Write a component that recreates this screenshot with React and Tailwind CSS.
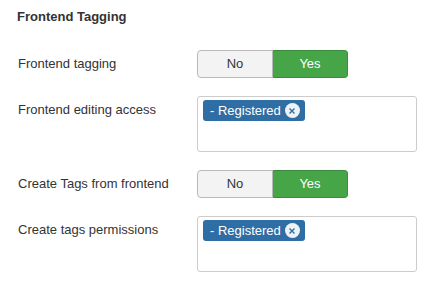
export default function App() {
  const font = { fontFamily: '"Liberation Sans", Arial, sans-serif' };
  const Toggle = () => (
    <div className="flex h-[28px] w-[151px] text-[13px]">
      <div className="flex flex-1 items-center justify-center rounded-l-[4px] border border-[#b8b8b8] bg-[#f3f3f3] text-[#333]">No</div>
      <div className="flex flex-1 items-center justify-center rounded-r-[4px] border border-l-0 border-[#3d8b3d] bg-[#46a546] text-white">Yes</div>
    </div>
  );
  const Box = () => (
    <div className="flex h-[56px] w-[220px] items-start rounded-[3px] border border-[#ccc] bg-white pl-[5px] pt-[3px]">
      <span className="flex h-[21px] items-center gap-[4px] rounded-[3px] bg-[#2f6ea5] pl-[7px] pr-[5px] text-[13px] text-white">
        - Registered
        <span className="flex h-[15px] w-[15px] items-center justify-center rounded-full bg-[#eef2f7]">
          <svg width="8" height="8" viewBox="0 0 8 8"><path d="M1.5 1.5L6.5 6.5M6.5 1.5L1.5 6.5" stroke="#2f6ea5" strokeWidth="1.4" /></svg>
        </span>
      </span>
    </div>
  );
  return (
    <div className="h-[306px] w-[447px] bg-white text-[#333]" style={font}>
      <div className="pl-[17px] pt-[8px] text-[13px] font-bold leading-[18px]">Frontend Tagging</div>
      <div className="mt-[24px] flex flex-col gap-[18px]">
        <div className="flex items-center">
          <div className="w-[197px] pl-[18px] text-[13px]">Frontend tagging</div>
          <Toggle />
        </div>
        <div className="flex items-start">
          <div className="w-[197px] pl-[18px] pt-[4px] text-[13px]">Frontend editing access</div>
          <Box />
        </div>
        <div className="flex items-center">
          <div className="w-[197px] pl-[18px] text-[13px]">Create Tags from frontend</div>
          <Toggle />
        </div>
        <div className="flex items-start">
          <div className="w-[197px] pl-[18px] pt-[4px] text-[13px]">Create tags permissions</div>
          <Box />
        </div>
      </div>
    </div>
  );
}
